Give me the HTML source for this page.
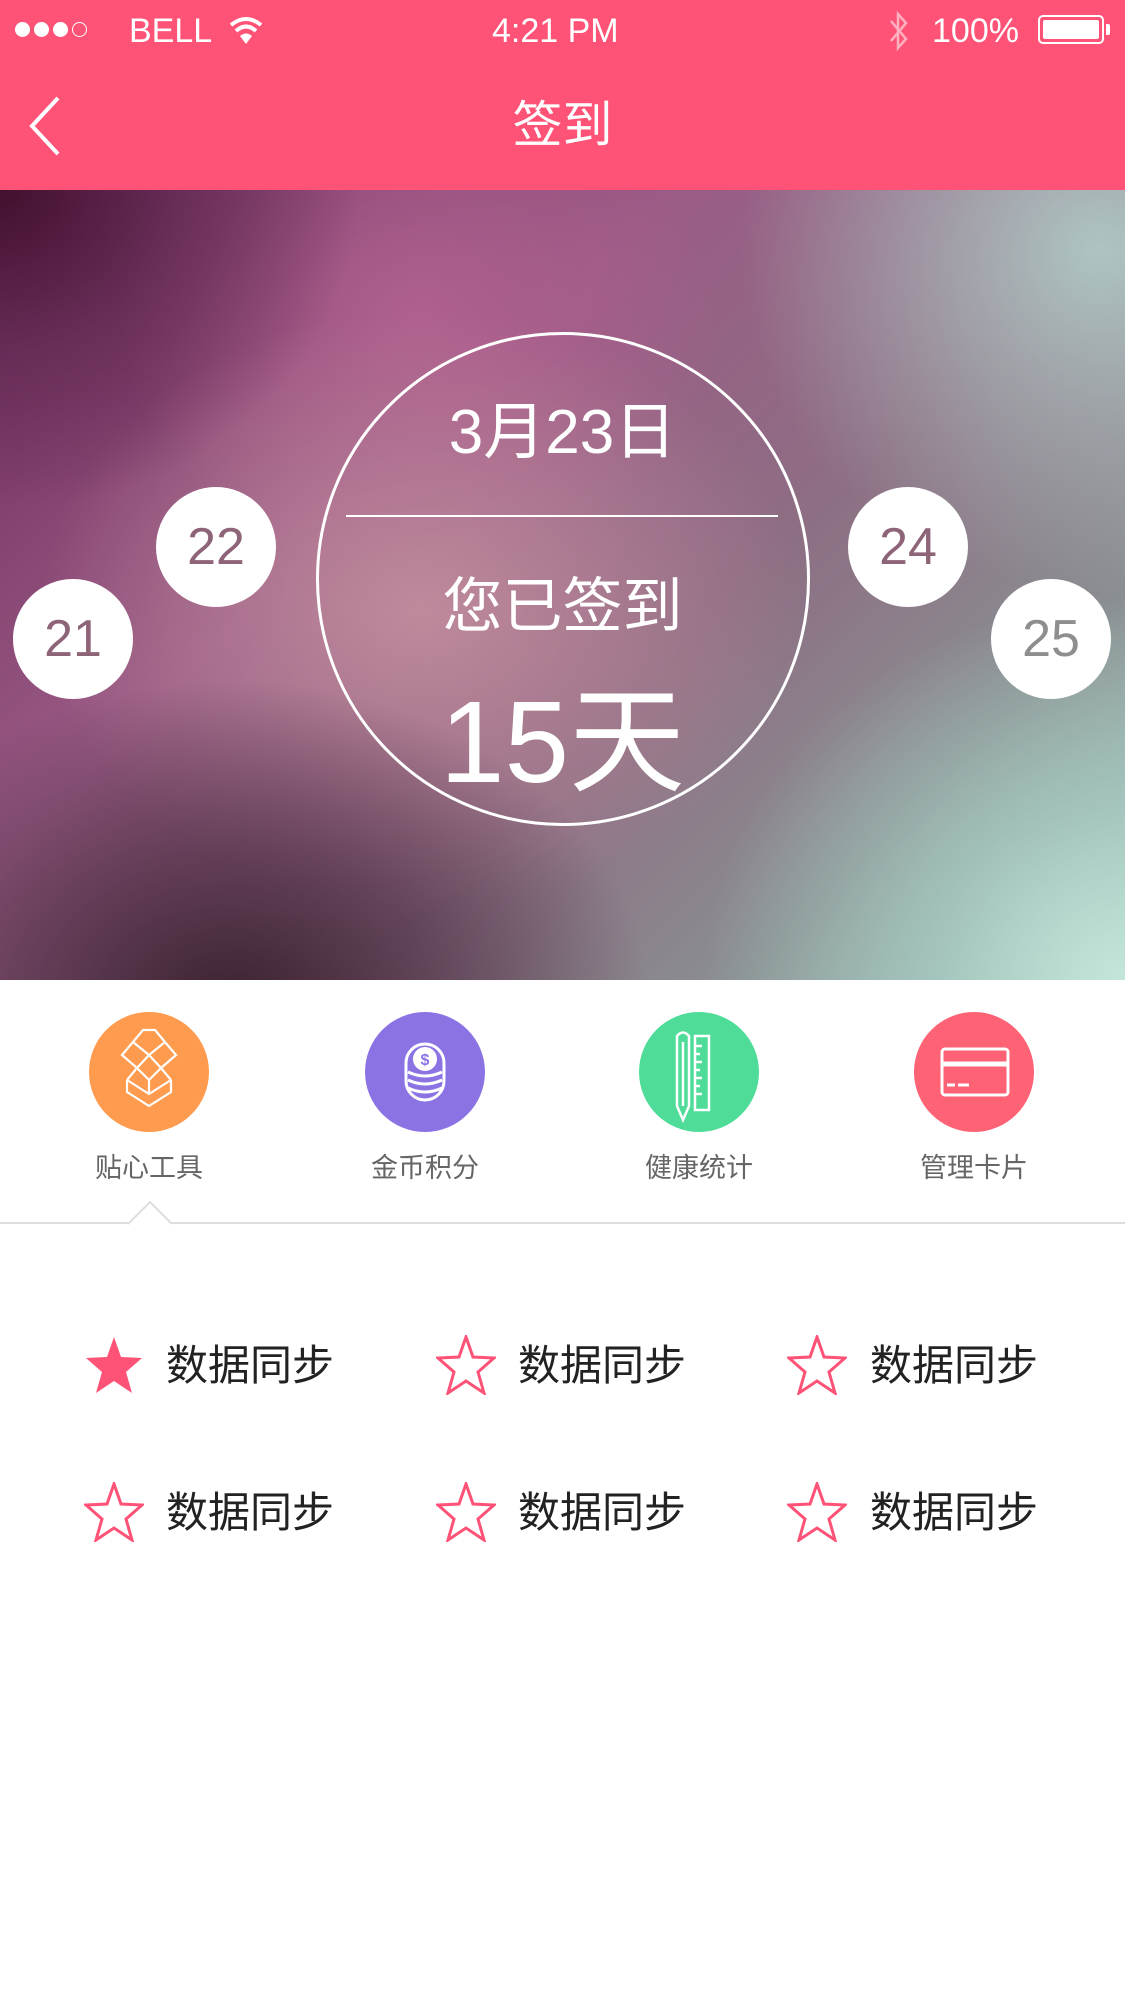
<!DOCTYPE html>
<html><head><meta charset="utf-8"><style>
*{margin:0;padding:0;box-sizing:border-box}
body{width:1125px;height:2001px;background:#fff;position:relative;overflow:hidden;font-family:"Liberation Sans","Noto Sans CJK SC",sans-serif}
.abs{position:absolute}
.top{left:0;top:0;width:1125px;height:190px;background:#fe5276}
.hero{left:0;top:190px;width:1125px;height:790px;overflow:hidden;
background:
radial-gradient(ellipse 420px 380px at 1125px 790px,#c4e6da 0%,rgba(170,210,200,.7) 45%,rgba(160,190,185,0) 100%),
radial-gradient(ellipse 360px 340px at 1100px 60px,#aec4c2 0%,rgba(140,150,155,0) 100%),
radial-gradient(ellipse 420px 330px at 230px 820px,#3a2130 0%,rgba(70,40,60,.6) 50%,rgba(90,60,80,0) 100%),
radial-gradient(ellipse 360px 320px at 0px 0px,#44102f 0%,rgba(95,40,80,.7) 50%,rgba(120,60,100,0) 100%),
radial-gradient(ellipse 380px 300px at 420px 420px,#bf8a9c 0%,rgba(190,130,150,0) 100%),
radial-gradient(ellipse 300px 260px at 420px 130px,#b0608e 0%,rgba(170,90,130,0) 100%),
linear-gradient(135deg,#6e2a5c 0%,#9a5b85 35%,#8d6f83 60%,#8a8f92 80%,#9fbdb5 100%)}
.big{left:316px;top:332px;width:494px;height:494px;border:3px solid #fff;border-radius:50%}
.line{left:346px;top:515px;width:432px;height:2px;background:#fff}
.t{color:#fff;text-align:center;width:1125px;left:0;line-height:1}
.sm{width:120px;height:120px;border-radius:50%;background:#fff;color:#8e6478;font-size:52px;line-height:120px;text-align:center}
.ic{width:120px;height:120px;border-radius:50%;top:1012px}
.lb{top:1155px;width:200px;text-align:center;font-size:27px;color:#666;line-height:1}
.item{font-size:42px;color:#222;line-height:1}
</style></head><body>
<div class="abs top"></div>
<div class="abs" style="left:15px;top:22px;display:flex;gap:4px">
<span style="width:15px;height:15px;border-radius:50%;background:#fff;display:block"></span>
<span style="width:15px;height:15px;border-radius:50%;background:#fff;display:block"></span>
<span style="width:15px;height:15px;border-radius:50%;background:#fff;display:block"></span>
<span style="width:15px;height:15px;border-radius:50%;border:1.5px solid #fff;display:block"></span>
</div>
<div class="abs" style="left:129px;top:12px;color:#fff;font-size:34px">BELL</div>
<svg class="abs" style="left:228px;top:16px" width="36" height="30" viewBox="0 0 36 30"><path d="M3 9 Q18 -3 33 9" stroke="#fff" stroke-width="4" fill="none"/><path d="M8 15 Q18 6 28 15" stroke="#fff" stroke-width="4" fill="none"/><path d="M18 28 L12 20 Q18 15 24 20Z" fill="#fff"/></svg>
<div class="abs" style="left:492px;top:12px;color:#fff;font-size:34px">4:21 PM</div>
<svg class="abs" style="left:886px;top:10px" width="26" height="42" viewBox="0 0 26 42"><path d="M5 11 L20 29 L12 38 L12 4 L20 13 L5 31" stroke="rgba(255,255,255,.55)" stroke-width="2.5" fill="none"/></svg>
<div class="abs" style="left:932px;top:12px;color:#fff;font-size:34px">100%</div>
<div class="abs" style="left:1038px;top:15px;width:66px;height:29px;border:2px solid #fff;border-radius:5px;padding:3px"><div style="background:#fff;width:100%;height:100%;border-radius:2px"></div></div>
<div class="abs" style="left:1106px;top:24px;width:4px;height:11px;background:#fff;border-radius:0 2px 2px 0"></div>
<svg class="abs" style="left:26px;top:94px" width="36" height="64" viewBox="0 0 36 64"><path d="M32 4 L6 32 L32 60" stroke="#fff" stroke-width="4" fill="none"/></svg>
<div class="abs t" style="top:100px;font-size:50px">签到</div>
<div class="abs hero"></div>
<div class="abs big"></div>
<div class="abs line"></div>
<div class="abs t" style="top:402px;font-size:62px">3月23日</div>
<div class="abs t" style="top:577px;font-size:60px">您已签到</div>
<div class="abs t" style="top:684px;font-size:116px">15天</div>
<div class="abs sm" style="left:13px;top:579px">21</div>
<div class="abs sm" style="left:156px;top:487px">22</div>
<div class="abs sm" style="left:848px;top:487px">24</div>
<div class="abs sm" style="left:991px;top:579px;color:#8e8e8e">25</div>
<div class="abs ic" style="left:89px;background:#fe9b4f"></div>
<svg class="abs" style="left:89px;top:1012px" width="120" height="120" viewBox="0 0 120 120" fill="none" stroke="#fff" stroke-width="2.2"><path d="M60 43 L44 30 L33 43 L48 56 Z M60 43 L76 30 L87 43 L72 56 Z M48 56 L60 43 L72 56 L60 68 Z M33 43 L48 56 L38 68 M87 43 L72 56 L82 68 M38 68 L60 82 L82 68 M44 30 L54 18 L66 18 L76 30 M60 68 L60 82 M38 68 L38 80 L60 94 L82 80 L82 68"/></svg>
<div class="abs ic" style="left:365px;background:#8c73e4"></div>
<svg class="abs" style="left:365px;top:1012px" width="120" height="120" viewBox="0 0 120 120"><rect x="41" y="32" width="38" height="56" rx="19" fill="none" stroke="#fff" stroke-width="3"/><path d="M43 60 Q60 68 77 60 M43 68 Q60 76 77 68 M43 76 Q60 84 77 76" stroke="#fff" stroke-width="3" fill="none"/><circle cx="60" cy="47" r="12" fill="#fff"/><text x="60" y="53" text-anchor="middle" font-size="16" font-weight="bold" fill="#8c73e4" font-family="Liberation Sans">$</text></svg>
<div class="abs ic" style="left:639px;background:#4edc98"></div>
<svg class="abs" style="left:639px;top:1012px" width="120" height="120" viewBox="0 0 120 120" fill="none" stroke="#fff" stroke-width="2.5"><path d="M38 34 Q44 27 50 34 L50 104 L44 118 L38 104 Z" transform="translate(0,-10)"/><path d="M44 30 L44 94"/><rect x="56" y="24" width="14" height="74"/><path d="M56 34 h7 M56 42 h5 M56 50 h7 M56 58 h5 M56 66 h7 M56 74 h5 M56 82 h7"/></svg>
<div class="abs ic" style="left:914px;background:#fe6275"></div>
<svg class="abs" style="left:914px;top:1012px" width="120" height="120" viewBox="0 0 120 120" fill="none" stroke="#fff" stroke-width="3"><rect x="28" y="37" width="66" height="46" rx="3"/><path d="M28 52 H94" stroke-width="5"/><path d="M33 73 h8 M44 73 h11"/></svg>
<div class="abs lb" style="left:49px">贴心工具</div>
<div class="abs lb" style="left:325px">金币积分</div>
<div class="abs lb" style="left:599px">健康统计</div>
<div class="abs lb" style="left:874px">管理卡片</div>
<div class="abs" style="left:0;top:1222px;width:1125px;height:2px;background:#ddd"></div>
<svg class="abs" style="left:128px;top:1200px" width="44" height="26" viewBox="0 0 44 26"><path d="M0 24 L22 2 L44 24" fill="#fff" stroke="#ddd" stroke-width="2"/><rect x="3" y="24" width="38" height="2" fill="#fff"/></svg>
<svg width="0" height="0" style="position:absolute"><defs><path id="st" d="M30 2 L37 22 L58 23 L42 37 L48 58 L30 46 L12 58 L18 37 L2 23 L23 22 Z"/></defs></svg>
<svg class="abs" style="left:84px;top:1335px" width="60" height="60" viewBox="0 0 60 60"><use href="#st" fill="#fe5276"/></svg>
<svg class="abs" style="left:436px;top:1335px" width="60" height="60" viewBox="0 0 60 60"><use href="#st" fill="none" stroke="#fe5276" stroke-width="3"/></svg>
<svg class="abs" style="left:787px;top:1335px" width="60" height="60" viewBox="0 0 60 60"><use href="#st" fill="none" stroke="#fe5276" stroke-width="3"/></svg>
<svg class="abs" style="left:84px;top:1482px" width="60" height="60" viewBox="0 0 60 60"><use href="#st" fill="none" stroke="#fe5276" stroke-width="3"/></svg>
<svg class="abs" style="left:436px;top:1482px" width="60" height="60" viewBox="0 0 60 60"><use href="#st" fill="none" stroke="#fe5276" stroke-width="3"/></svg>
<svg class="abs" style="left:787px;top:1482px" width="60" height="60" viewBox="0 0 60 60"><use href="#st" fill="none" stroke="#fe5276" stroke-width="3"/></svg>
<div class="abs item" style="left:166px;top:1345px">数据同步</div>
<div class="abs item" style="left:518px;top:1345px">数据同步</div>
<div class="abs item" style="left:870px;top:1345px">数据同步</div>
<div class="abs item" style="left:166px;top:1492px">数据同步</div>
<div class="abs item" style="left:518px;top:1492px">数据同步</div>
<div class="abs item" style="left:870px;top:1492px">数据同步</div>
</body></html>
